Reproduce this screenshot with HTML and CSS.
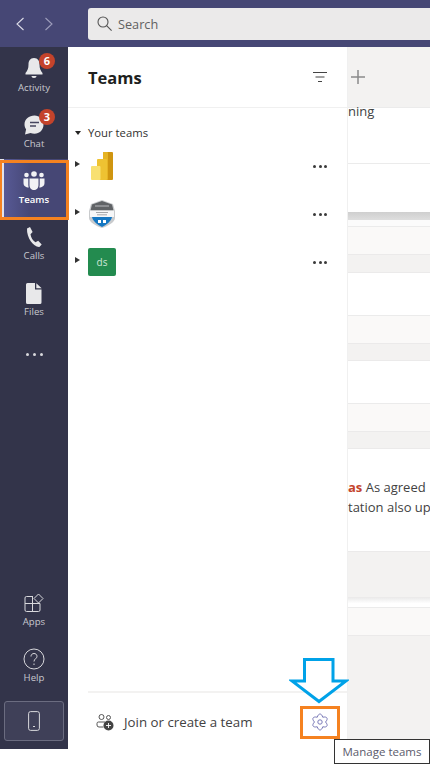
FILE: index.html
```html
<!DOCTYPE html>
<html lang="en">
<head>
<meta charset="utf-8">
<title>Teams</title>
<link rel="stylesheet" href="styles.css">
</head>
<body>
<div class="app">
  <header class="topbar">
    <div class="nav-arrows">
      <svg class="arrow" width="12" height="16" viewBox="0 0 12 16"><path d="M9.500 2 3 8l6.500 6" /></svg>
      <svg class="arrow dim" width="12" height="16" viewBox="0 0 12 16"><path d="M2.500 2 9 8l-6.500 6" /></svg>
    </div>
    <div class="search">
      <svg width="15" height="15" viewBox="0 0 15 15" class="search-icon"><circle cx="6" cy="6" r="5"/><path d="m9.600 9.600 5 5"/></svg>
      <span>Search</span>
    </div>
  </header>
  <div class="body">
    <nav class="rail">
      <div class="rail-top">
        <div class="rail-item">
          <div class="ico"><svg width="20" height="22" viewBox="0 0 20 22" fill="#e8e8ea"><path d="M10 0C6 0 4.500 3 4.500 6.500c0 4-1 6-3 8.500v1.500h17V15c-2-2.500-3-4.500-3-8.500C15.500 3 14 0 10 0zM7.500 18h5c0 1.300-1 2-2.500 2s-2.500-.7-2.500-2z"/></svg></div>
          <span>Activity</span>
          <b class="badge">6</b>
        </div>
        <div class="rail-item">
          <div class="ico"><svg width="22" height="22" viewBox="0 0 22 22"><path fill="#e8e8ea" d="M11.500 1.500C6 1.500 1.500 5 1.500 10.300c0 2 .6 3.600 1.600 5L2 20.500 7.500 19c1.200.5 2.600.8 4 .8 5 0 9-4 9-9.300S16.500 1.500 11.500 1.500z"/><path stroke="#45455f" stroke-width="1.300" d="M7 8.500h9M7 12h6"/></svg></div>
          <span>Chat</span>
          <b class="badge">3</b>
        </div>
        <div class="rail-item active">
          <div class="ico"><svg width="22" height="20" viewBox="0 0 22 20" fill="#f2f2f5"><circle cx="11" cy="3" r="2.800"/><circle cx="3.500" cy="4" r="2.300"/><circle cx="18.500" cy="4" r="2.300"/><path d="M6.500 7.500h9V14c0 3-2 5-4.500 5s-4.500-2-4.500-5zM.5 7.500h4.800V14c0 1 .2 1.800.5 2.500C2.800 16.500.5 14.800.5 12zM16.700 7.500h4.800V12c0 2.800-2.300 4.500-5.300 4.500.3-.7.500-1.500.5-2.500z"/></svg></div>
          <span>Teams</span>
        </div>
        <div class="rail-item">
          <div class="ico"><svg width="18" height="22" viewBox="0 0 18 22" fill="#e8e8ea"><path d="M2 2.500 5 1l2.600 5L5.500 8.300c.5 3.500 2.300 6.300 5 8l2.700-1.500 3.500 3.800-2.300 2.300C9 21.500 1.500 12 2 2.500z"/></svg></div>
          <span>Calls</span>
        </div>
        <div class="rail-item">
          <div class="ico"><svg width="16" height="21" viewBox="0 0 16 21"><path fill="#e8e8ea" d="M1.500 0H9v6.500h6.500V19.500a1.500 1.500 0 0 1-1.500 1.500H1.500A1.500 1.500 0 0 1 0 19.500V1.500A1.500 1.500 0 0 1 1.500 0zM10.300.3l5.400 5H10.300z"/></svg></div>
          <span>Files</span>
        </div>
        <div class="rail-more"><i></i><i></i><i></i></div>
      </div>
      <div class="rail-bottom">
        <div class="rail-item">
          <div class="ico"><svg class="outline" width="20" height="20" viewBox="0 0 20 20"><path d="M9 3.500H2.500A1.500 1.500 0 0 0 1 5v12a1.500 1.500 0 0 0 1.500 1.500h12A1.500 1.500 0 0 0 16 17v-6.500H1M8.500 3.500v15"/><path d="m14.500 1 4.500 4.500-4.500 4.500L10 5.500z"/></svg></div>
          <span>Apps</span>
        </div>
        <div class="rail-item">
          <div class="ico"><svg class="outline" width="22" height="22" viewBox="0 0 22 22"><circle cx="11" cy="11" r="10"/><path d="M8 8.500C8 6.500 9.300 5.500 11 5.500s3 1.100 3 2.800c0 2.500-3 2.500-3 5.200M11 15.500v1.500"/></svg></div>
          <span>Help</span>
        </div>
        <div class="device">
          <svg class="outline" width="12" height="20" viewBox="0 0 12 20"><rect x=".6" y=".6" width="10.800" height="18.800" rx="2"/><path d="M5 15.500h2"/></svg>
        </div>
      </div>
    </nav>

    <aside class="panel">
      <div class="panel-head">
        <h1>Teams</h1>
        <svg class="filter" width="14" height="10" viewBox="0 0 14 10"><path d="M0 .5h14M2.500 5h9M5 9.500h4"/></svg>
      </div>
      <div class="panel-list">
        <div class="section-title"><i class="caret-down"></i><span>Your teams</span></div>
        <div class="team">
          <i class="caret-right"></i>
          <svg class="team-logo" width="28" height="28" viewBox="0 0 28 28">
            <rect x="15" y="0" width="10" height="28" rx="1" fill="#cf9510"/>
            <rect x="15" y="0" width="5" height="28" rx="1" fill="#e6b424"/>
            <rect x="9" y="7" width="10" height="21" rx="1" fill="#eec232"/>
            <rect x="3" y="14" width="9.500" height="14" rx="1" fill="#f8e071"/>
          </svg>
          <span class="dots"><i></i><i></i><i></i></span>
        </div>
        <div class="team">
          <i class="caret-right"></i>
          <svg class="team-logo" width="28" height="28" viewBox="0 0 28 28">
            <path d="M14 0 25 4 27 11V18C27 22 20 26 14 28 8 26 1 22 1 18V11L3 4z" fill="#c9cbcd"/>
            <path d="M14 1 24 4.500 25.500 10.500H2.500L4 4.500z" fill="#606366"/>
            <rect x="2" y="10.500" width="24" height="6.500" fill="#f6f7f8"/>
            <path d="M4 17h20c-.5 3.500-5 7.500-10 10C9 24.500 4.500 20.500 4 17z" fill="#1577c2"/>
            <path d="M8 12.500h12M9 14.800h10" stroke="#8f9295" stroke-width=".8"/>
            <path d="M7 6h14" stroke="#b9bbbe" stroke-width="1"/>
            <rect x="10" y="20" width="3" height="3" fill="#fff"/><rect x="15" y="20" width="3" height="3" fill="#fff"/>
          </svg>
          <span class="dots"><i></i><i></i><i></i></span>
        </div>
        <div class="team">
          <i class="caret-right"></i>
          <div class="avatar">ds</div>
          <span class="dots"><i></i><i></i><i></i></span>
        </div>
      </div>
      <div class="panel-foot">
        <div class="join">
          <svg class="join-icon" width="18" height="17" viewBox="0 0 18 17"><circle cx="5.500" cy="3" r="2.500"/><circle cx="12.500" cy="3.500" r="2"/><path d="M7.500 13H3a2 2 0 0 1-2-2V9.500a1.500 1.500 0 0 1 1.500-1.500H9"/><circle cx="12.500" cy="11.500" r="5" fill="#444" stroke="none"/><path d="M12.500 9v5M10 11.500h5" stroke="#fff"/></svg>
          <span>Join or create a team</span>
        </div>
        <svg class="gear" width="16" height="18" viewBox="0 0 16 18"><path d="M5.250 4.240C6.500-.1 9.500-.1 10.750 4.240 15.130 3.150 16.630 5.750 13.500 9 16.630 12.250 15.130 14.850 10.750 13.760 9.500 18.100 6.500 18.100 5.250 13.760 .87 14.850-.63 12.250 2.500 9-.63 5.750 .87 3.150 5.250 4.240z"/><circle cx="8" cy="9" r="2.200"/></svg>
      </div>
    </aside>

    <main class="content">
      <div class="tabs"><svg width="14" height="14" viewBox="0 0 14 14"><path d="M7 0v14M0 7h14"/></svg></div>
      <div class="msg h56"><p class="clip-top">ning</p></div>
      <div class="msg h48"></div>
      <div class="shadow"></div>
      <div class="spacer"></div>
      <div class="reply"></div>
      <div class="band h19"></div>
      <div class="msg h43"></div>
      <div class="reply"></div>
      <div class="band h18"></div>
      <div class="msg h43"></div>
      <div class="reply"></div>
      <div class="band h18"></div>
      <div class="msg h102">
        <p class="mention"><b>as</b> As agreed</p>
        <p class="line2">tation also up</p>
      </div>
      <div class="band h47"></div>
      <div class="spacer2"></div>
      <div class="reply"></div>
      <div class="band fill"></div>
    </main>
  </div>
</div>

<div class="callout team-mark"></div>
<div class="callout gear-mark"></div>
<svg class="down-arrow" width="60" height="47" viewBox="0 0 60 47"><path d="M15.500 2.500h28.500v21.500h13L30 44.500 3 24h12.500z"/></svg>
<div class="tooltip">Manage teams</div>
</body>
</html>
```

FILE: styles.css
```css
* { box-sizing: border-box; }
html, body { margin: 0; padding: 0; }
body { width: 430px; height: 769px; overflow: hidden; background: #fff; font-family: "Open Sans", "Noto Sans", sans-serif; position: relative; }
p { margin: 0; }

.app { height: 749px; display: flex; flex-direction: column; }
.topbar { height: 47px; background: #464775; display: flex; align-items: center; flex: none; padding-left: 14px; }
.nav-arrows { width: 74px; display: flex; gap: 17px; align-items: center; }
.arrow { fill: none; stroke: #dcdce8; stroke-width: 1.100; }
.arrow.dim { stroke: #9d9dbb; }
.search { width: 342px; height: 32px; background: #ebeaea; border-radius: 3px 0 0 3px; display: flex; align-items: center; gap: 6px; padding-left: 9px; font-size: 12.700px; color: #616161; flex: none; }
.search-icon { fill: none; stroke: #555; stroke-width: 1.100; }

.body { flex: 1; display: flex; min-height: 0; }

.rail { width: 68px; flex: none; background: #33344a; display: flex; flex-direction: column; justify-content: space-between; }
.rail-item { height: 56px; padding-top: 10px; display: flex; flex-direction: column; align-items: center; color: #c8c8ce; font-size: 9.600px; line-height: 13px; position: relative; }
.ico { height: 24px; display: flex; align-items: center; justify-content: center; flex: none; }
.rail-top { display: flex; flex-direction: column; }
.rail-item.active { height: 58px; margin-bottom: -2px; color: #fff; font-weight: 600; background: linear-gradient(90deg, #5a5c9a 0, #464775 45%, #464775 100%); box-shadow: inset 4px 0 0 #e3e3ea; }
.badge { position: absolute; left: 39px; top: 5.500px; width: 16px; height: 16px; border-radius: 50%; background: #c4432b; color: #fff; font-size: 11px; font-weight: 700; line-height: 16px; text-align: center; }
.rail-more { height: 55px; display: flex; align-items: center; justify-content: center; gap: 3px; }
.rail-more i { width: 3px; height: 3px; border-radius: 50%; background: #d8d8dc; }
.rail-more i + i { margin-left: 1px; }
.rail-bottom { display: flex; flex-direction: column; align-items: center; padding-bottom: 8px; }
.rail-bottom .rail-item { width: 68px; }
.outline { fill: none; stroke: #d8d8dc; stroke-width: 1; }
.device { width: 60px; height: 40px; margin-top: 8px; border: 1px solid #6b6c80; border-radius: 3px; background: #3f4058; display: flex; align-items: center; justify-content: center; }

.panel { width: 280px; flex: none; background: #fff; border-right: 1px solid #f0f0f0; display: flex; flex-direction: column; }
.panel-head { height: 61px; flex: none; border-bottom: 1px solid #f0f0f0; display: flex; align-items: center; justify-content: space-between; padding: 0 20px; }
.panel-head h1 { margin: 0; font-size: 16.500px; font-weight: 700; color: #201f1e; }
.filter { fill: none; stroke: #444; stroke-width: 1; }
.panel-list { flex: 1; padding-top: 15px; }
.section-title { display: flex; align-items: center; height: 19px; font-size: 11.300px; color: #323130; padding-left: 7px; gap: 7px; }
.caret-down { width: 0; height: 0; border-left: 3.500px solid transparent; border-right: 3.500px solid transparent; border-top: 4px solid #252423; }
.team { height: 48px; display: flex; align-items: center; padding: 0 20px 0 7px; gap: 8px; }
.caret-right { width: 0; height: 0; border-top: 3px solid transparent; border-bottom: 3px solid transparent; border-left: 5px solid #333; flex: none; margin-bottom: 4px; }
.team-logo { flex: none; }
.avatar { width: 28px; height: 28px; border-radius: 2px; background: #238b4f; color: #cfe6d8; font-size: 10px; display: flex; align-items: center; justify-content: center; }
.dots { margin-left: auto; display: flex; gap: 2.500px; }
.dots i { width: 3px; height: 3px; border-radius: 50%; background: #3a3a3a; }
.panel-foot { height: 58px; margin-left: 20px; border-top: 2px solid #f3f2f1; display: flex; align-items: center; justify-content: space-between; padding: 2px 19px 0 8px; flex: none; }
.join { display: flex; align-items: center; gap: 10px; font-size: 13.300px; color: #424242; }
.join-icon { fill: none; stroke: #444; stroke-width: .9; }
.gear { fill: none; stroke: #7a7ab8; stroke-width: 1; }

.content { flex: 1; min-width: 0; background: #f3f2f1; overflow: hidden; display: flex; flex-direction: column; font-size: 13px; color: #424242; white-space: nowrap; }
.tabs { height: 61px; flex: none; display: flex; align-items: center; padding-left: 3px; border-bottom: 1px solid #ebebeb; }
.tabs svg { stroke: #8a8a8a; stroke-width: 1.500; }
.msg { background: #fff; flex: none; position: relative; }
.h56 { height: 56px; border-bottom: 1px solid #ebebeb; }
.h48 { height: 48px; }
.h43 { height: 43px; border-bottom: 1px solid #ebebeb; }
.h102 { height: 102px; }
.clip-top { line-height: 16px; margin-top: -5px; }
.shadow { height: 8px; flex: none; background: linear-gradient(#cfcfcf, #dedede); }
.spacer { height: 7px; flex: none; background: #fbfbfb; border-bottom: 1px solid #ebebeb; }
.spacer2 { height: 10px; flex: none; background: linear-gradient(#ececec, #fff 60%); border-bottom: 1px solid #ebebeb; }
.reply { height: 27px; flex: none; background: #faf9f8; }
.band { flex: none; background: #f3f2f1; border-top: 1px solid #ebeaea; border-bottom: 1px solid #ebeaea; }
.h18 { height: 18px; }
.h19 { height: 19px; }
.h47 { height: 47px; }
.fill { flex: 1; border-bottom: 0; }
.mention { margin-top: 28px; line-height: 20px; }
.mention b { color: #c4432b; }
.line2 { line-height: 20px; }

.callout { position: absolute; border: 3px solid #f58220; }
.team-mark { left: 0; top: 160px; width: 69px; height: 60px; border-left-width: 2px; }
.gear-mark { left: 300px; top: 706px; width: 40px; height: 33px; }
.down-arrow { position: absolute; left: 289px; top: 657px; fill: #fff; stroke: #00a2e8; stroke-width: 3; }
.tooltip { position: absolute; left: 334px; top: 739px; width: 96px; height: 25px; background: #fff; border: 1px solid #333; font-size: 11.500px; line-height: 23px; text-align: center; color: #5b5b6b; white-space: nowrap; }
```
